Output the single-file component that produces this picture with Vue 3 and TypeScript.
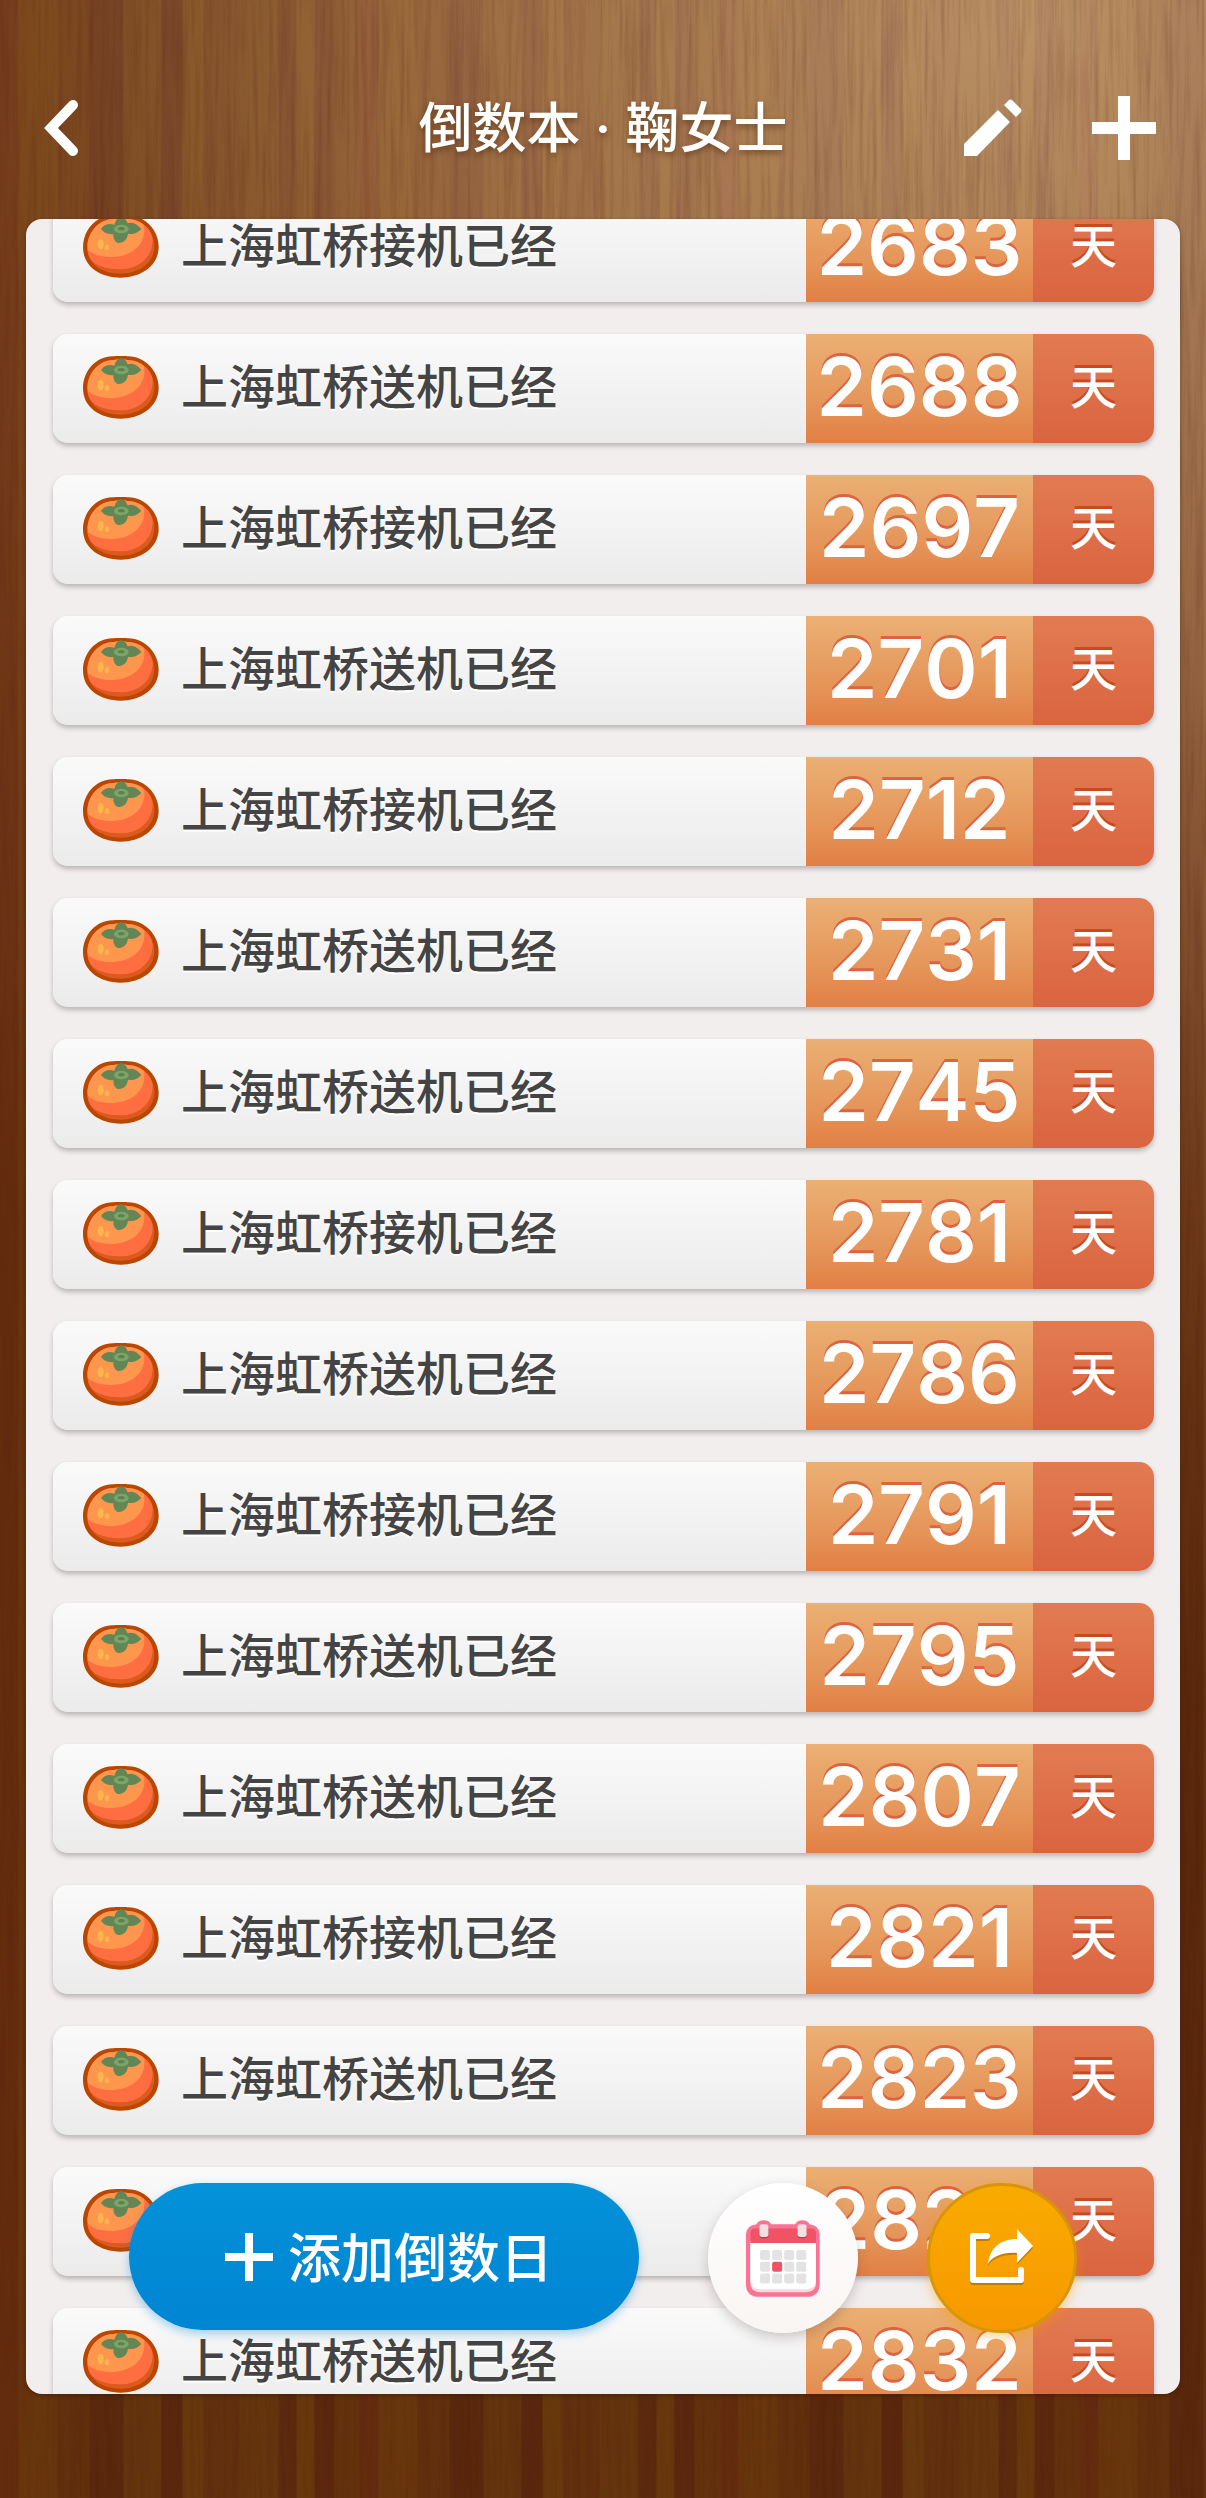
<script setup lang="ts">
interface Countdown {
  label: string
  days: number
}

const pickup = '上海虹桥接机已经'
const dropoff = '上海虹桥送机已经'

const items: Countdown[] = [
  { label: pickup, days: 2683 },
  { label: dropoff, days: 2688 },
  { label: pickup, days: 2697 },
  { label: dropoff, days: 2701 },
  { label: pickup, days: 2712 },
  { label: dropoff, days: 2731 },
  { label: dropoff, days: 2745 },
  { label: pickup, days: 2781 },
  { label: dropoff, days: 2786 },
  { label: pickup, days: 2791 },
  { label: dropoff, days: 2795 },
  { label: dropoff, days: 2807 },
  { label: pickup, days: 2821 },
  { label: dropoff, days: 2823 },
  { label: pickup, days: 2827 },
  { label: dropoff, days: 2832 },
]

const calendarCells: { x: number; y: number; marked: boolean }[] = []
for (let row = 0; row < 3; row++) {
  for (let col = 0; col < 4; col++) {
    calendarCells.push({ x: 179 + col * 36, y: 267 + row * 35, marked: row === 1 && col === 1 })
  }
}
</script>

<template>
  <div class="screen">
    <svg class="grain" aria-hidden="true">
      <filter id="wood-grain" x="0" y="0" width="100%" height="100%" color-interpolation-filters="sRGB">
        <feTurbulence type="fractalNoise" baseFrequency="0.22 0.008" numOctaves="4" seed="8" />
        <feColorMatrix values="0 0 0 0 0.3  0 0 0 0 0.08  0 0 0 0 0.06  1.6 0 0 0 -0.66" />
      </filter>
      <rect width="100%" height="100%" filter="url(#wood-grain)" />
    </svg>

    <header class="bar">
      <button class="icon-button" type="button" aria-label="返回">
        <svg width="36" height="60" viewBox="2 0 36 60">
          <path d="M31 7 9 30l22 23" fill="none" stroke="#fff" stroke-width="10" stroke-linecap="round" />
        </svg>
      </button>
      <h1 class="title">倒数本 · 鞠女士</h1>
      <div class="actions">
        <button class="icon-button" type="button" aria-label="编辑">
          <svg width="58" height="58" viewBox="0 0 58 58">
            <path d="M0 45 34 11 46 23 13 57H0zM40 6 44.500 1.500Q46.500-.5 48.500 1.500L56.500 9.500Q58.500 11.500 56.500 13.500L52 18z" fill="#fff" />
          </svg>
        </button>
        <button class="icon-button" type="button" aria-label="添加">
          <svg width="64" height="64" viewBox="0 0 64 64">
            <path d="M26 0h12v26h26v12H38v26H26V38H0V26h26z" fill="#fff" />
          </svg>
        </button>
      </div>
    </header>

    <main class="panel">
      <ul class="list">
        <li v-for="item in items" :key="item.days" class="row">
          <div class="name">
            <svg class="fruit" width="76" height="63" viewBox="40 45 228 189" aria-hidden="true">
              <path d="M40 142C40 88 82 45 130 46Q153 42 176 46C226 47 267 90 267 140C267 200 210 233 153 233C92 233 40 200 40 142Z" fill="#b94700" />
              <path d="M53 142C53 96 88 57 132 57Q153 53 174 57C219 58 255 94 254 138C254 192 204 221 153 221C98 221 53 194 53 142Z" fill="#dc5a20" />
              <path d="M53 142C53 96 88 57 132 57Q153 53 174 57C219 58 249 92 249 122C247 175 205 209 148 208C112 208 78 198 63 178C56 168 53 155 53 142Z" fill="#ff6e40" />
              <path d="M55 150C48 101 88 57 132 57Q153 53 174 57C198 59 213 66 223 76C232 130 190 168 132 171C98 172 70 164 55 150Z" fill="#ff964e" />
              <path d="M153 51C164 52 171 60 174 70C190 64 204 74 215 87C205 98 190 105 175 101C172 120 162 129 144 129C133 123 131 113 131 102C116 105 102 97 94 87C103 72 119 69 134 74C137 62 143 54 153 51Z" fill="#638657" />
              <ellipse cx="155" cy="87" rx="22" ry="13" fill="#7ba567" />
              <ellipse cx="155" cy="86" rx="10" ry="5" fill="#5c8050" />
              <ellipse cx="93" cy="132" rx="9" ry="16" fill="#ffb74d" />
              <ellipse cx="112" cy="142" rx="6" ry="9" fill="#ffb74d" />
            </svg>
            <span class="label">{{ item.label }}</span>
          </div>
          <div class="count">{{ item.days }}</div>
          <div class="unit">天</div>
        </li>
      </ul>

      <nav class="dock">
        <button class="add" type="button">
          <svg width="48" height="48" viewBox="0 0 48 48" aria-hidden="true">
            <path d="M20 0h8v20h20v8H28v20h-8V28H0v-8h20z" fill="#fff" />
          </svg>
          <span class="add-text">添加倒数日</span>
        </button>
        <button class="round calendar" type="button" aria-label="日历">
          <svg width="74" height="77" viewBox="137 178 221 229">
            <path d="M168 190Q174 178 190 178T212 190H284Q290 178 305 178T327 190Q357 194 357 220V368Q357 407 318 407H176Q137 407 137 368V220Q137 194 168 190Z" fill="#fa7395" />
            <path d="M150 240H346V364Q346 393 316 393H180Q150 393 150 364Z" fill="#ffd6e0" />
            <path d="M150 240H346V356Q346 384 316 384H180Q150 384 150 356Z" fill="#fff" />
            <path d="M150 246V218Q150 203 165 203H331Q346 203 346 218V246Z" fill="#f05365" />
            <rect x="177" y="194" width="27" height="38" rx="8" fill="#b93a55" />
            <rect x="291" y="194" width="27" height="38" rx="8" fill="#b93a55" />
            <rect x="177" y="190" width="27" height="38" rx="8" fill="#f4dfdf" />
            <rect x="291" y="190" width="27" height="38" rx="8" fill="#f4dfdf" />
            <rect
              v-for="cell in calendarCells"
              :key="`${cell.x}-${cell.y}`"
              :x="cell.x"
              :y="cell.y"
              width="30"
              height="30"
              rx="6"
              :fill="cell.marked ? '#f05365' : '#e3e3e3'"
            />
          </svg>
        </button>
        <button class="round share" type="button" aria-label="分享">
          <svg width="64" height="60" viewBox="0 0 64 60">
            <path d="M17 8H3V52H51V42" fill="none" stroke="#fff" stroke-width="6" stroke-linecap="round" stroke-linejoin="round" />
            <path d="M47 1 63 18 47 35V25C33 24 23 28 18 36C20 20 30 11 47 11Z" fill="#fff" />
          </svg>
        </button>
      </nav>
    </main>
  </div>
</template>

<style>
body {
  margin: 0;
}
</style>

<style scoped>
.screen {
  position: relative;
  box-sizing: border-box;
  display: flex;
  flex-direction: column;
  height: 100vh;
  padding: 0 26px 104px;
  overflow: hidden;
  font-family: "Noto Sans CJK SC", sans-serif;
  background:
    radial-gradient(120% 68% at 85% 0, rgba(255, 222, 176, 0.54) 0%, rgba(255, 210, 160, 0.38) 36%, rgba(255, 190, 130, 0.11) 72%, rgba(255, 190, 130, 0) 100%),
    repeating-linear-gradient(
      90deg,
      #642c0e 0 18px, #68360c 19px 57px, #62300c 58px 89px, #5a280c 90px 123px,
      #64340d 124px 161px, #5a270d 162px 182px, #68380d 183px 203px, #62300d 204px 239px,
      #65350d 240px 278px, #5c2a0d 279px 296px, #68380c 297px 314px, #5c280d 315px 334px,
      #63320c 335px 359px, #642c0e 360px
    );
}

.grain {
  position: absolute;
  inset: 0;
  width: 100%;
  height: 100%;
  opacity: 0.25;
}

button {
  margin: 0;
  padding: 0;
  border: 0;
  background: none;
  font: inherit;
  color: #fff;
  cursor: pointer;
}

button svg {
  display: block;
}

.bar {
  position: relative;
  flex: none;
  box-sizing: border-box;
  display: grid;
  grid-template-columns: 1fr auto 1fr;
  align-items: center;
  height: 219px;
  padding: 37px 18px 0;
}

.icon-button {
  justify-self: start;
}

.title {
  margin: 0;
  padding-top: 2px;
  color: #fff;
  font-family: Inter, "Noto Sans CJK SC", sans-serif;
  font-size: 54px;
  font-weight: 500;
  line-height: 80px;
  text-shadow: 0 3px 6px rgba(60, 30, 0, 0.5);
}

.actions {
  display: flex;
  align-items: center;
  justify-content: flex-end;
  gap: 70px;
  padding-right: 6px;
}

.panel {
  position: relative;
  flex: 1;
  min-height: 0;
  overflow: hidden;
  border-radius: 16px;
  background: #f2eeed;
  box-shadow: 0 2px 4px rgba(60, 25, 0, 0.5);
}

.list {
  display: flex;
  flex-direction: column;
  gap: 32px;
  margin: -26px 0 0;
  padding: 0 26px 0 27px;
  list-style: none;
}

.row {
  flex: none;
  display: flex;
  height: 109px;
  overflow: hidden;
  border-radius: 15px;
  box-shadow: 0 3px 5px rgba(60, 50, 50, 0.3);
}

.name {
  flex: 1;
  display: flex;
  align-items: center;
  gap: 22px;
  padding: 0 0 2px 30px;
  color: #444;
  font-size: 47px;
  font-weight: 500;
  line-height: 72px;
  text-shadow: 0 2px 0 #fff;
  background: linear-gradient(#fafafa, #ebebeb);
}

.label {
  padding-bottom: 8px;
}

.fruit {
  flex: none;
}

.count {
  width: 227px;
  color: #fff;
  font-family: Inter, sans-serif;
  font-size: 81px;
  font-weight: 600;
  font-kerning: none;
  line-height: 106px;
  text-align: center;
  text-shadow: 0 -3px 0 #dd6440;
  background: linear-gradient(#ebb074, #e59458 65%, #e17f45);
}

.unit {
  width: 121px;
  color: #fff;
  font-size: 47px;
  font-weight: 500;
  line-height: 100px;
  text-align: center;
  text-shadow: 0 -3px 0 #c64a22;
  background: linear-gradient(#e27b51, #da6440);
}

.dock {
  position: absolute;
  right: 0;
  bottom: 61px;
  left: 0;
  display: flex;
  align-items: flex-start;
  justify-content: center;
  gap: 69px;
}

.add {
  box-sizing: border-box;
  display: flex;
  align-items: center;
  justify-content: center;
  gap: 15px;
  width: 510px;
  height: 147px;
  padding-left: 10px;
  border-radius: 74px;
  font-size: 53px;
  font-weight: 500;
  background: linear-gradient(#0492d8, #0084d3);
  box-shadow: 0 4px 10px rgba(0, 132, 211, 0.35);
}

.add-text {
  padding-bottom: 4px;
}

.round {
  box-sizing: border-box;
  display: flex;
  align-items: center;
  justify-content: center;
  width: 150px;
  height: 150px;
  border-radius: 50%;
}

.calendar {
  background: linear-gradient(#fff, #f9f5f3);
  box-shadow: 0 5px 12px rgba(80, 60, 60, 0.25);
}

.share {
  border: 3px solid #d99508;
  background: linear-gradient(#f9ab00, #f79800);
  box-shadow: 0 5px 12px rgba(247, 152, 0, 0.4);
}

.share svg {
  overflow: visible;
  filter: drop-shadow(0 2px 0 #c07c00);
}
</style>
